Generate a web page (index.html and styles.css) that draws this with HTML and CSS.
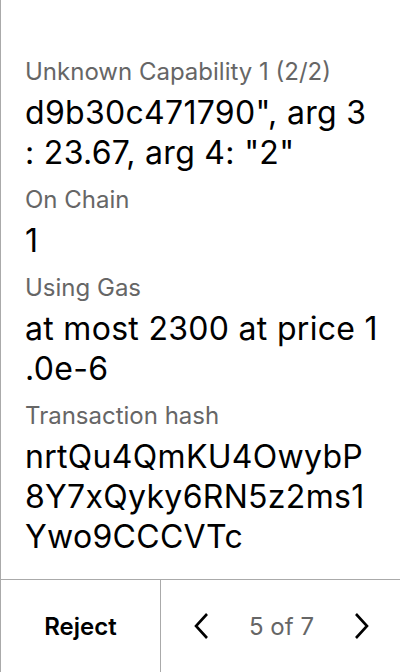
FILE: index.html
```html
<!DOCTYPE html>
<html>
<head>
<meta charset="utf-8">
<link rel="stylesheet" href="styles.css">
</head>
<body>
<div class="screen">
  <div class="content">
    <div class="field">
      <div class="label">Unknown Capability 1 (2/2)</div>
      <div class="value">d9b30c471790", arg 3<br>: 23.67, arg 4: "2"</div>
    </div>
    <div class="field">
      <div class="label">On Chain</div>
      <div class="value">1</div>
    </div>
    <div class="field">
      <div class="label">Using Gas</div>
      <div class="value">at most 2300 at price 1<br>.0e-6</div>
    </div>
    <div class="field">
      <div class="label">Transaction hash</div>
      <div class="value">nrtQu4QmKU4OwybP<br>8Y7xQyky6RN5z2ms1<br>Ywo9CCCVTc</div>
    </div>
  </div>
  <div class="footer">
    <button class="reject">Reject</button>
    <div class="pager">
      <svg class="chev" width="16" height="28" viewBox="0 0 16 28"><path d="M14 2 L3 14 L14 26" fill="none" stroke="#000" stroke-width="2.6"/></svg>
      <span class="count">5 of 7</span>
      <svg class="chev" width="16" height="28" viewBox="0 0 16 28"><path d="M2 2 L13 14 L2 26" fill="none" stroke="#000" stroke-width="2.6"/></svg>
    </div>
  </div>
</div>
</body>
</html>
```
FILE: styles.css
```css
html, body {
  margin: 0;
  padding: 0;
  background: #fff;
}
body {
  font-family: Inter, "Noto Sans", sans-serif;
  color: #000;
}
.screen {
  width: 400px;
  height: 672px;
  box-sizing: border-box;
  border-left: 1px solid #aaa;
  display: flex;
  flex-direction: column;
}
.content {
  flex: 1;
  padding: 56px 24px 0 24px;
  display: flex;
  flex-direction: column;
  gap: 11px;
}
.label {
  font-size: 24px;
  line-height: 32px;
  color: #666;
}
.value {
  margin-top: 5px;
  font-size: 32px;
  line-height: 40px;
  letter-spacing: 0.3px;
  white-space: nowrap;
}
.footer {
  height: 92px;
  border-top: 1px solid #aaa;
  display: flex;
}
.reject {
  width: 160px;
  border: none;
  border-right: 1px solid #aaa;
  background: #fff;
  font-family: Inter, "Noto Sans", sans-serif;
  font-size: 24px;
  font-weight: 600;
  color: #000;
  padding: 0;
}
.pager {
  flex: 1;
  display: flex;
  align-items: center;
  justify-content: space-between;
  padding: 0 30px 0 32px;
}
.count {
  font-size: 24px;
  color: #666;
}
```
